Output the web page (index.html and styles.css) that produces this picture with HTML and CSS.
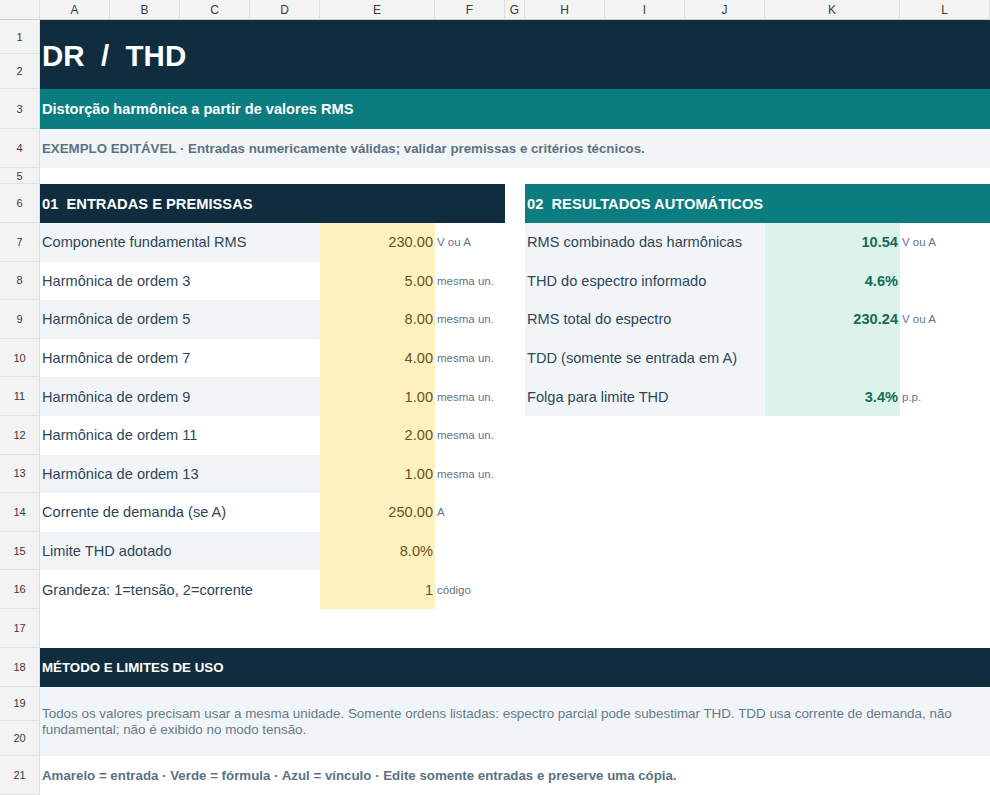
FILE: index.html
```html
<!DOCTYPE html>
<html lang="pt">
<head>
<meta charset="utf-8">
<title>DR / THD</title>
<link rel="stylesheet" href="styles.css">
</head>
<body>
<div class="sheet">
  <div class="ch corner"></div>
  <div class="ch">A</div><div class="ch">B</div><div class="ch">C</div><div class="ch">D</div>
  <div class="ch">E</div><div class="ch">F</div><div class="ch">G</div><div class="ch">H</div>
  <div class="ch">I</div><div class="ch">J</div><div class="ch">K</div><div class="ch">L</div>

  <div class="rh">1</div>
  <div class="c title">DR  /  THD</div>
  <div class="rh">2</div>

  <div class="rh">3</div>
  <div class="c subtitle">Distorção harmônica a partir de valores RMS</div>

  <div class="rh">4</div>
  <div class="c note">EXEMPLO EDITÁVEL · Entradas numericamente válidas; validar premissas e critérios técnicos.</div>

  <div class="rh">5</div>
  <div class="c full"></div>

  <div class="rh">6</div>
  <div class="c sec navy left">01  ENTRADAS E PREMISSAS</div>
  <div class="c"></div>
  <div class="c sec teal right">02  RESULTADOS AUTOMÁTICOS</div>

  <div class="rh">7</div>
  <div class="c lbl left4 alt">Componente fundamental RMS</div>
  <div class="c inp">230.00</div>
  <div class="c unit">V ou A</div>
  <div class="c"></div>
  <div class="c lbl right3 alt">RMS combinado das harmônicas</div>
  <div class="c out">10.54</div>
  <div class="c unit">V ou A</div>

  <div class="rh">8</div>
  <div class="c lbl left4">Harmônica de ordem 3</div>
  <div class="c inp">5.00</div>
  <div class="c unit">mesma un.</div>
  <div class="c"></div>
  <div class="c lbl right3 alt">THD do espectro informado</div>
  <div class="c out">4.6%</div>
  <div class="c unit"></div>

  <div class="rh">9</div>
  <div class="c lbl left4 alt">Harmônica de ordem 5</div>
  <div class="c inp">8.00</div>
  <div class="c unit">mesma un.</div>
  <div class="c"></div>
  <div class="c lbl right3 alt">RMS total do espectro</div>
  <div class="c out">230.24</div>
  <div class="c unit">V ou A</div>

  <div class="rh">10</div>
  <div class="c lbl left4">Harmônica de ordem 7</div>
  <div class="c inp">4.00</div>
  <div class="c unit">mesma un.</div>
  <div class="c"></div>
  <div class="c lbl right3 alt">TDD (somente se entrada em A)</div>
  <div class="c out"></div>
  <div class="c unit"></div>

  <div class="rh">11</div>
  <div class="c lbl left4 alt">Harmônica de ordem 9</div>
  <div class="c inp">1.00</div>
  <div class="c unit">mesma un.</div>
  <div class="c"></div>
  <div class="c lbl right3 alt">Folga para limite THD</div>
  <div class="c out">3.4%</div>
  <div class="c unit">p.p.</div>

  <div class="rh">12</div>
  <div class="c lbl left4">Harmônica de ordem 11</div>
  <div class="c inp">2.00</div>
  <div class="c unit">mesma un.</div>
  <div class="c rest"></div>

  <div class="rh">13</div>
  <div class="c lbl left4 alt">Harmônica de ordem 13</div>
  <div class="c inp">1.00</div>
  <div class="c unit">mesma un.</div>
  <div class="c rest"></div>

  <div class="rh">14</div>
  <div class="c lbl left4">Corrente de demanda (se A)</div>
  <div class="c inp">250.00</div>
  <div class="c unit">A</div>
  <div class="c rest"></div>

  <div class="rh">15</div>
  <div class="c lbl left4 alt">Limite THD adotado</div>
  <div class="c inp">8.0%</div>
  <div class="c unit"></div>
  <div class="c rest"></div>

  <div class="rh">16</div>
  <div class="c lbl left4">Grandeza: 1=tensão, 2=corrente</div>
  <div class="c inp">1</div>
  <div class="c unit">código</div>
  <div class="c rest"></div>

  <div class="rh">17</div>
  <div class="c full"></div>

  <div class="rh">18</div>
  <div class="c sec small navy full">MÉTODO E LIMITES DE USO</div>

  <div class="rh">19</div>
  <div class="c method">Todos os valores precisam usar a mesma unidade. Somente ordens listadas: espectro parcial pode subestimar THD. TDD usa corrente de demanda, não fundamental; não é exibido no modo tensão.</div>
  <div class="rh">20</div>

  <div class="rh">21</div>
  <div class="c legend">Amarelo = entrada · Verde = fórmula · Azul = vínculo · Edite somente entradas e preserve uma cópia.</div>
</div>
</body>
</html>
```

FILE: styles.css
```css
* { box-sizing: border-box; }

html, body {
  margin: 0;
  padding: 0;
  background: #ffffff;
}

body {
  font-family: "Liberation Sans", Arial, Helvetica, sans-serif;
  width: 990px;
  height: 795px;
  overflow: hidden;
}

.sheet {
  display: grid;
  grid-template-columns: 40px 70px 70px 70px 70px 115px 70px 20px 80px 80px 80px 135px 90px;
  grid-template-rows:
    20px 34px 35px 40px 39px 16px 39px
    38.6px 38.6px 38.6px 38.6px 38.6px 38.6px 38.6px 38.6px 38.6px 38.6px
    39px 39px 34px 35px 39px;
  width: 990px;
}

/* headers */
.ch {
  background: #f3f3f3;
  border-right: 1px solid #dedede;
  border-bottom: 1px solid #c9cfd3;
  color: #3a3a3a;
  font-size: 12px;
  display: flex;
  align-items: center;
  justify-content: center;
}

.rh {
  grid-column: 1;
  background: #f3f3f3;
  border-right: 1px solid #dcdcdc;
  border-bottom: 1px solid #e2e2e2;
  color: #3a3a3a;
  font-size: 11px;
  display: flex;
  align-items: center;
  justify-content: center;
}

/* cells */
.c {
  display: flex;
  align-items: center;
  padding: 0 2px;
  white-space: nowrap;
  overflow: hidden;
  min-width: 0;
}

.title {
  grid-column: 2 / -1;
  grid-row: span 2;
  background: #102c3f;
  color: #ffffff;
  font-weight: bold;
  font-size: 29.5px;
  white-space: pre;
  padding-top: 2px;
}

.subtitle {
  grid-column: 2 / -1;
  background: #0b7c80;
  color: #ffffff;
  font-weight: bold;
  font-size: 14.6px;
}

.note {
  grid-column: 2 / -1;
  background: #f1f5f8;
  color: #5c7283;
  font-weight: bold;
  font-size: 13.3px;
}

.full { grid-column: 2 / -1; }

.sec {
  color: #ffffff;
  font-weight: bold;
  font-size: 14.7px;
  white-space: pre;
}
.sec.small { font-size: 13.3px; }
.navy { background: #102c3f; }
.teal { background: #0b7c80; }
.left { grid-column: 2 / span 6; }
.right { grid-column: 9 / span 5; }

.lbl {
  color: #2e4557;
  font-size: 14.6px;
}
.left4 { grid-column: 2 / span 4; }
.right3 { grid-column: 9 / span 3; }
.alt { background: #f1f5f8; }

.inp {
  background: #fef1c0;
  color: #6a5218;
  font-size: 14.6px;
  justify-content: flex-end;
}

.out {
  background: #dcf3ec;
  color: #176b52;
  font-weight: bold;
  font-size: 14.6px;
  justify-content: flex-end;
}

.unit {
  color: #617685;
  font-size: 11.5px;
}

.rest { grid-column: 8 / -1; }

.method {
  grid-column: 2 / -1;
  grid-row: span 2;
  background: #f1f5f8;
  color: #647a8a;
  font-size: 13.4px;
  line-height: 16px;
  white-space: normal;
  padding-top: 2px;
}

.legend {
  grid-column: 2 / -1;
  color: #5c7283;
  font-weight: bold;
  font-size: 13.3px;
}
```
